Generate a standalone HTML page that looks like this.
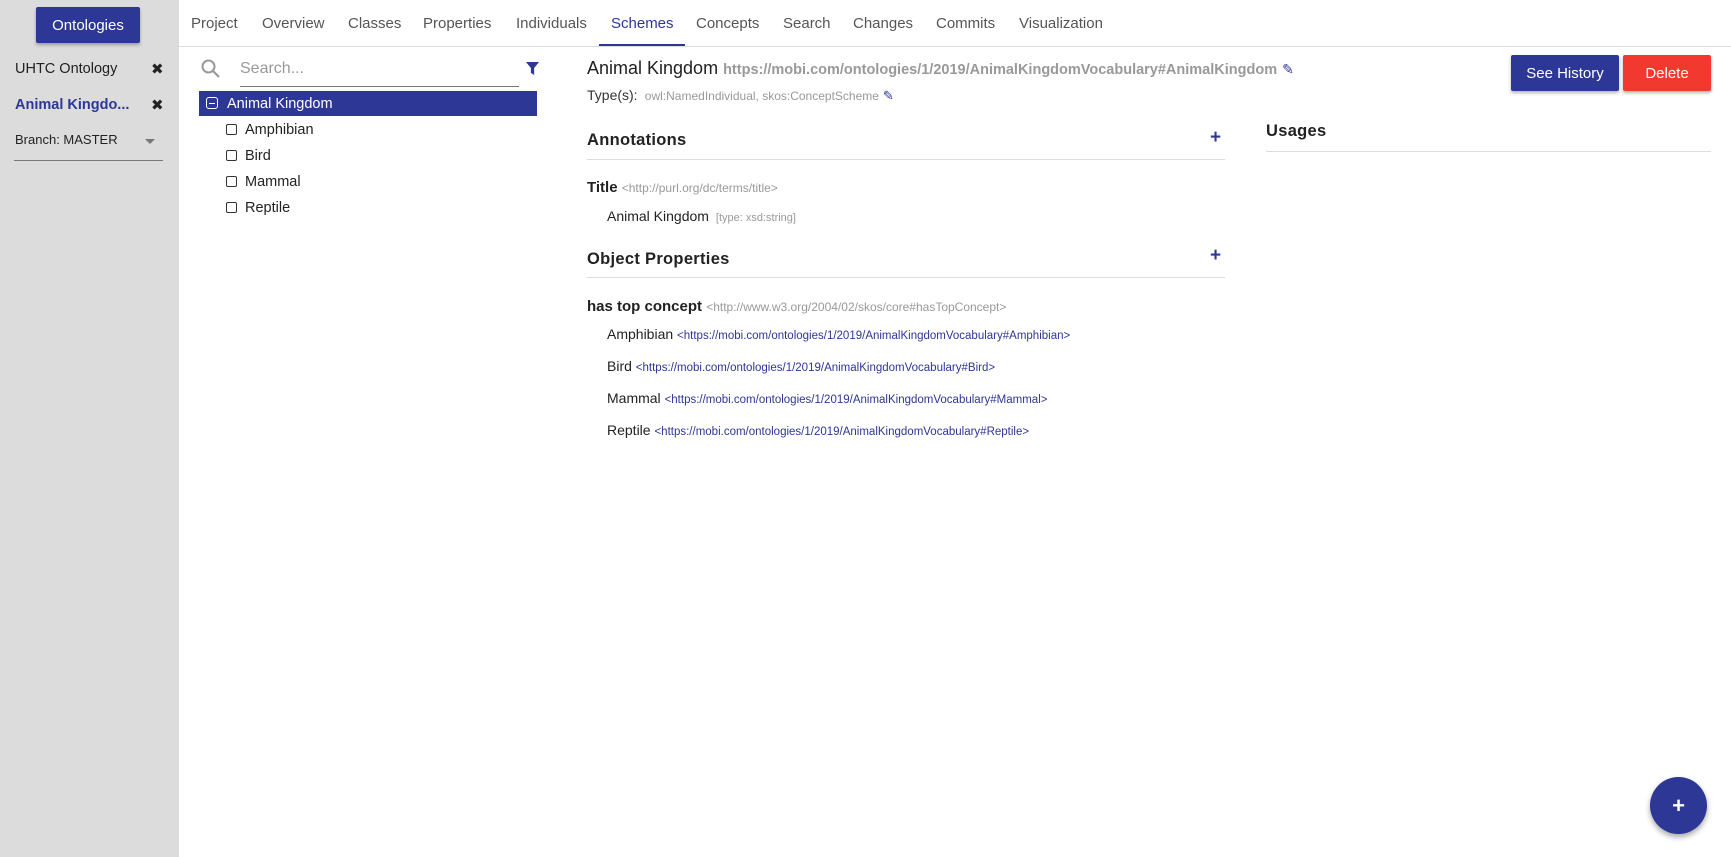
<!DOCTYPE html>
<html><head><meta charset="utf-8"><style>
*{margin:0;padding:0;box-sizing:border-box}
body{width:1731px;height:857px;position:relative;overflow:hidden;font-family:"Liberation Sans",sans-serif;background:#fff;color:#222}
.a{position:absolute;white-space:nowrap}
#side{position:absolute;left:0;top:0;width:179px;height:857px;background:#dcdcdc}
.btn{position:absolute;color:#fff;font-size:15px;display:flex;align-items:center;justify-content:center;border-radius:2px;box-shadow:0 2px 3px rgba(0,0,0,.3)}
.tab{position:absolute;top:15px;font-size:15px;color:#555}
.sh{font-size:16.5px;font-weight:bold;color:#222;letter-spacing:.3px}
.line{position:absolute;height:1px;background:#ddd}
.g{color:#999;font-size:12px}
.lnk{color:#2d3796;font-size:11.5px}
.cb{position:absolute;width:11px;height:11px;border:1.5px solid #333;border-radius:2px}
.tr{font-size:14.5px;color:#222}
</style></head><body>
<div id="side">
 <div class="btn" style="left:36px;top:7px;width:104px;height:36px;background:#2d3796">Ontologies</div>
 <div class="a" style="left:15px;top:61px;font-size:14.5px;color:#222">UHTC Ontology</div>
 <div class="a" style="left:151px;top:60px;font-size:15px">✖</div>
 <div class="a" style="left:15px;top:97px;font-size:14.5px;color:#2d3796;font-weight:bold">Animal Kingdo...</div>
 <div class="a" style="left:151px;top:96px;font-size:15px">✖</div>
 <div class="a" style="left:15px;top:132px;font-size:13px;color:#222">Branch: MASTER</div>
 <div class="a" style="left:145px;top:139px;width:0;height:0;border-left:5px solid transparent;border-right:5px solid transparent;border-top:5px solid #777"></div>
 <div class="a" style="left:14px;top:160px;width:149px;height:1px;background:#777"></div>
</div>
<div class="line" style="left:179px;top:46px;width:1552px"></div>
<div class="tab" style="left:191px">Project</div>
<div class="tab" style="left:262px">Overview</div>
<div class="tab" style="left:348px">Classes</div>
<div class="tab" style="left:423px">Properties</div>
<div class="tab" style="left:516px">Individuals</div>
<div class="tab" style="left:611px;color:#2d3796">Schemes</div>
<div class="tab" style="left:696px">Concepts</div>
<div class="tab" style="left:783px">Search</div>
<div class="tab" style="left:853px">Changes</div>
<div class="tab" style="left:936px">Commits</div>
<div class="tab" style="left:1019px">Visualization</div>
<div class="a" style="left:599px;top:44px;width:86px;height:2px;background:#2d3796"></div>

<svg class="a" style="left:200px;top:58px" width="22" height="22" viewBox="0 0 22 22"><circle cx="8.5" cy="8.5" r="6" fill="none" stroke="#999" stroke-width="2"/><line x1="13" y1="13" x2="19" y2="19" stroke="#999" stroke-width="2.2"/></svg>
<div class="a" style="left:240px;top:60px;font-size:16px;color:#999">Search...</div>
<div class="a" style="left:240px;top:86px;width:279px;height:1px;background:#777"></div>
<svg class="a" style="left:526px;top:62px" width="13" height="13" viewBox="0 0 12 12"><path d="M0 0H12L7.5 5.5V12L4.5 10V5.5Z" fill="#2d3796"/></svg>
<div class="a" style="left:199px;top:91px;width:338px;height:25px;background:#2d3796"></div>
<div class="a" style="left:206px;top:97px;width:12px;height:12px;border:1.3px solid #fff;border-radius:3px"></div>
<div class="a" style="left:209px;top:102.5px;width:6px;height:1.3px;background:#fff"></div>
<div class="a tr" style="left:227px;top:96px;color:#fff">Animal Kingdom</div>
<div class="cb" style="left:226px;top:124px"></div><div class="a tr" style="left:245px;top:122px">Amphibian</div>
<div class="cb" style="left:226px;top:150px"></div><div class="a tr" style="left:245px;top:148px">Bird</div>
<div class="cb" style="left:226px;top:176px"></div><div class="a tr" style="left:245px;top:174px">Mammal</div>
<div class="cb" style="left:226px;top:202px"></div><div class="a tr" style="left:245px;top:200px">Reptile</div>

<div class="a" style="left:587px;top:58px;font-size:18px;color:#222">Animal Kingdom <span style="font-size:14.5px;color:#999;font-weight:bold">https://mobi.com/ontologies/1/2019/AnimalKingdomVocabulary#AnimalKingdom</span> <span style="color:#2d3796;font-size:14px">✎</span></div>
<div class="a" style="left:587px;top:87px;font-size:14px;color:#333">Type(s): <span class="g">&nbsp;owl:NamedIndividual, skos:ConceptScheme</span> <span style="color:#2d3796;font-size:13px">✎</span></div>
<div class="btn" style="left:1511px;top:55px;width:108px;height:36px;background:#2d3796">See History</div>
<div class="btn" style="left:1623px;top:55px;width:88px;height:36px;background:#f2392f">Delete</div>

<div class="a sh" style="left:587px;top:131px">Annotations</div>
<div class="a" style="left:1210px;top:127px;font-size:19px;color:#2d3796;font-weight:bold">+</div>
<div class="line" style="left:587px;top:159px;width:638px"></div>
<div class="a" style="left:587px;top:179px;font-size:15px;font-weight:bold">Title <span class="g" style="font-weight:normal">&lt;http://purl.org/dc/terms/title&gt;</span></div>
<div class="a" style="left:607px;top:208px;font-size:14px">Animal Kingdom <span class="g" style="font-size:11px">&nbsp;[type: xsd:string]</span></div>

<div class="a sh" style="left:587px;top:250px">Object Properties</div>
<div class="a" style="left:1210px;top:245px;font-size:19px;color:#2d3796;font-weight:bold">+</div>
<div class="line" style="left:587px;top:277px;width:638px"></div>
<div class="a" style="left:587px;top:298px;font-size:15px;font-weight:bold">has top concept <span class="g" style="font-weight:normal">&lt;http://www.w3.org/2004/02/skos/core#hasTopConcept&gt;</span></div>
<div class="a" style="left:607px;top:326px;font-size:14px">Amphibian <span class="lnk">&lt;https://mobi.com/ontologies/1/2019/AnimalKingdomVocabulary#Amphibian&gt;</span></div>
<div class="a" style="left:607px;top:358px;font-size:14px">Bird <span class="lnk">&lt;https://mobi.com/ontologies/1/2019/AnimalKingdomVocabulary#Bird&gt;</span></div>
<div class="a" style="left:607px;top:390px;font-size:14px">Mammal <span class="lnk">&lt;https://mobi.com/ontologies/1/2019/AnimalKingdomVocabulary#Mammal&gt;</span></div>
<div class="a" style="left:607px;top:422px;font-size:14px">Reptile <span class="lnk">&lt;https://mobi.com/ontologies/1/2019/AnimalKingdomVocabulary#Reptile&gt;</span></div>

<div class="a sh" style="left:1266px;top:122px">Usages</div>
<div class="line" style="left:1266px;top:151px;width:445px"></div>

<div class="a" style="left:1650px;top:777px;width:57px;height:57px;border-radius:50%;background:#2d3796;box-shadow:0 3px 6px rgba(0,0,0,.35);color:#fff;font-size:22px;font-weight:bold;display:flex;align-items:center;justify-content:center">+</div>
</body></html>
